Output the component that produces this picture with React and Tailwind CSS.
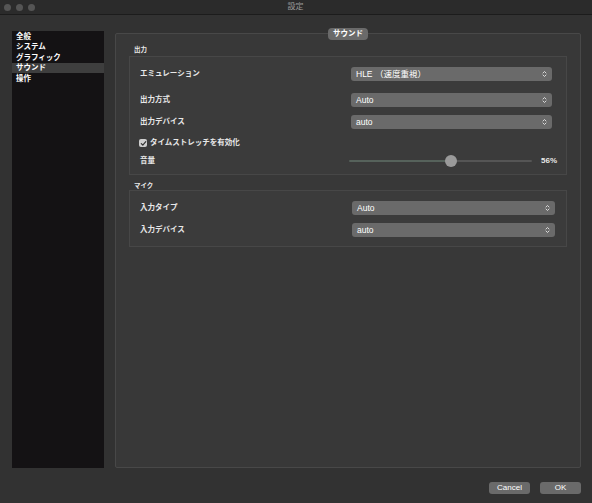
import React from "react";

const FONT = { fontFamily: '"Liberation Sans","Noto Sans CJK JP",sans-serif' };

function Chevron() {
  return (
    <svg width="5" height="8" viewBox="0 0 5 8" className="shrink-0">
      <path d="M1 3 L2.5 1.5 L4 3" fill="none" stroke="#e5e5e5" strokeWidth="0.9" strokeLinecap="round" strokeLinejoin="round" />
      <path d="M1 5 L2.5 6.5 L4 5" fill="none" stroke="#e5e5e5" strokeWidth="0.9" strokeLinecap="round" strokeLinejoin="round" />
    </svg>
  );
}

function Select({ value, w = "w-[201px]" }) {
  return (
    <div className={`${w} h-[14px] rounded-[3px] bg-[#6a6a6a] flex items-center justify-between pl-[5px] pr-[5px] text-[8.5px] text-white`}>
      <span className="leading-none">{value}</span>
      <Chevron />
    </div>
  );
}

function Row({ label, value, mt, w, pr = "pr-[14px]" }) {
  return (
    <div className={`flex items-center justify-between h-[14px] ${mt}`}>
      <span className="text-[7.5px] font-bold text-[#e8e8e8] leading-none pl-[10px]">{label}</span>
      <div className={pr}>
        <Select value={value} w={w} />
      </div>
    </div>
  );
}

export default function App() {
  const side = ["全般", "システム", "グラフィック", "サウンド", "操作"];
  return (
    <div style={FONT} className="w-[592px] h-[503px] bg-[#323232] flex flex-col overflow-hidden select-none">
      {/* Title bar */}
      <div className="h-[15px] bg-[#2b2b2b] border-b border-[#1c1c1c] flex items-center relative shrink-0">
        <div className="flex gap-[5px] pl-[4px]">
          <div className="w-[7px] h-[7px] rounded-full bg-[#555]" />
          <div className="w-[7px] h-[7px] rounded-full bg-[#555]" />
          <div className="w-[7px] h-[7px] rounded-full bg-[#555]" />
        </div>
        <div className="flex-1 text-center text-[8px] text-[#9a9a9a] leading-none pr-[36px]">設定</div>
      </div>

      {/* Body */}
      <div className="flex pl-[12px] pr-[11px] pt-[16px] shrink-0">
        {/* Sidebar */}
        <div className="w-[92px] h-[437px] bg-[#141214] flex flex-col shrink-0">
          {side.map((s, i) => (
            <div
              key={s}
              className={`h-[10.5px] flex items-center pl-[4px] text-[7.5px] font-bold text-white leading-none ${i === 3 ? "bg-[#3e3e3e]" : ""}`}
            >
              {s}
            </div>
          ))}
        </div>

        {/* Group box */}
        <div className="ml-[11px] mt-[2px] w-[466px] h-[435px] relative border border-[#484848] rounded-[2px] bg-[#383838]">
          <div className="absolute left-1/2 -translate-x-1/2 -top-[6px] w-[40px] h-[12px] rounded-[4px] bg-[#6a6a6a] flex items-center justify-center text-[7.5px] font-bold text-white leading-none">
            サウンド
          </div>

          <div className="pl-[13px] pr-[13px] pt-[11px]">
            <div className="h-[11px] flex items-center pl-[5px] text-[6.5px] font-bold text-[#e8e8e8] leading-none">出力</div>
            <div className="border border-[#474747] bg-[#3b3b3b] flex flex-col pt-[10px] pb-[7px]">
              <Row label="エミュレーション" value="HLE （速度重視）" mt="" />
              <Row label="出力方式" value="Auto" mt="mt-[12px]" />
              <Row label="出力デバイス" value="auto" mt="mt-[8px]" />
              <div className="h-[12px] mt-[8px] flex items-center pl-[9px] gap-[3px]">
                <div className="w-[8px] h-[8px] rounded-[2px] bg-[#cfcfcf] flex items-center justify-center">
                  <svg width="7" height="7" viewBox="0 0 7 7">
                    <path d="M1.3 3.6 L2.8 5.1 L5.8 1.6" fill="none" stroke="#333" strokeWidth="1.2" strokeLinecap="round" strokeLinejoin="round" />
                  </svg>
                </div>
                <span className="text-[7.5px] font-bold text-[#e8e8e8] leading-none">タイムストレッチを有効化</span>
              </div>
              <div className="h-[12px] mt-[6px] flex items-center">
                <span className="text-[7.5px] font-bold text-[#e8e8e8] leading-none pl-[10px] w-[219px]">音量</span>
                <div className="relative w-[183px] h-[12px] flex items-center">
                  <div className="w-[102px] h-[2px] bg-[#56625b] rounded-l-full" />
                  <div className="flex-1 h-[2px] bg-[#555] rounded-r-full" />
                  <div className="absolute left-[96px] top-0 w-[12px] h-[12px] rounded-full bg-[#9a9a9a]" />
                </div>
                <span className="ml-[9px] text-[8px] font-bold text-[#e8e8e8] leading-none">56%</span>
              </div>
            </div>

            <div className="h-[15px] flex items-end pb-[1px] pl-[5px] text-[6.5px] font-bold text-[#e8e8e8] leading-none">マイク</div>
            <div className="border border-[#474747] bg-[#3b3b3b] flex flex-col pt-[10px] pb-[9px]">
              <Row label="入力タイプ" value="Auto" mt="" w="w-[203px]" pr="pr-[11px]" />
              <Row label="入力デバイス" value="auto" mt="mt-[8px]" w="w-[203px]" pr="pr-[11px]" />
            </div>
          </div>
        </div>
      </div>

      {/* Footer */}
      <div className="flex-1 flex items-start justify-end gap-[10px] pr-[11px] pt-[14px]">
        <div className="w-[41px] h-[12px] rounded-[3px] bg-[#6a6a6a] flex items-center justify-center text-[8px] text-white leading-none">Cancel</div>
        <div className="w-[41px] h-[12px] rounded-[3px] bg-[#6a6a6a] flex items-center justify-center text-[8px] text-white leading-none">OK</div>
      </div>
    </div>
  );
}
